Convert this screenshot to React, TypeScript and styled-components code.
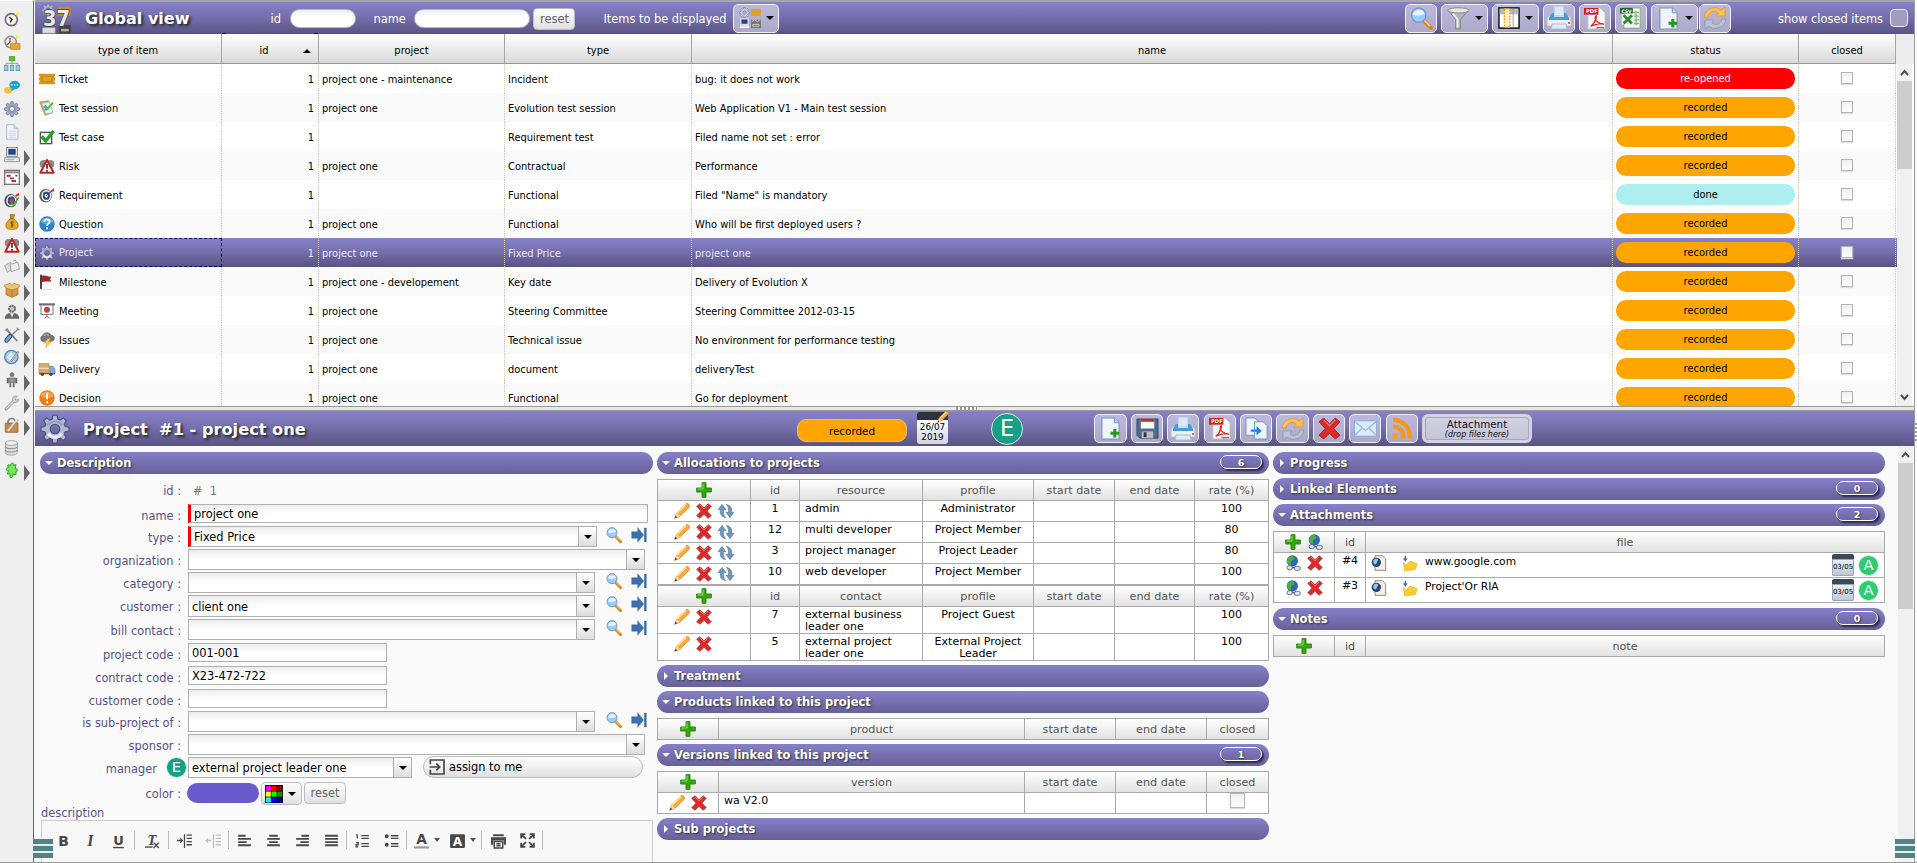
import React from "react";
import styled, { createGlobalStyle, css } from "styled-components";

const GlobalStyle = createGlobalStyle`
  * { box-sizing: border-box; }
  body { margin: 0; background: #fafafa; overflow: hidden; }
  body, button, input { font-family: "DejaVu Sans", Verdana, sans-serif; font-size: 11.4px; }
`;

const purple = "linear-gradient(#8781c9, #7670ae 45%, #595384)";

/* ------------------------------------------------------------------ icons */

type Draw = React.ReactNode;

const gearPath =
  "M10.3 1h3.4l.5 3 2 .9 2.5-1.8 2.4 2.4-1.8 2.5.9 2 3 .5v3.2l-3 .5-.9 2 1.8 2.5-2.4 2.4-2.5-1.8-2 .9-.5 3h-3.4l-.5-3-2-.9-2.5 1.8-2.4-2.4 1.8-2.5-.9-2-3-.5v-3.2l3-.5.9-2-1.8-2.5 2.4-2.4 2.5 1.8 2-.9z M12 8.2a3.8 3.8 0 1 0 0 7.6a3.8 3.8 0 1 0 0-7.6z";

const arts: Record<string, Draw> = {
  gear: (
    <>
      <path d={gearPath} fill="#a3aeca" stroke="#56638c" strokeWidth="1" fillRule="evenodd" />
      <circle cx="12" cy="12" r="5.6" fill="none" stroke="#7f8cb3" strokeWidth="1.2" />
    </>
  ),
  gearLight: (
    <>
      <path d={gearPath} fill="#b1b8d2" stroke="#465078" strokeWidth=".9" fillRule="evenodd" />
      <path d="M6.500 15.500c2 3.500 8 4.500 11 0" fill="none" stroke="#e6e9f6" strokeWidth="2.600" />
      <path d="M6.500 9c2-3.500 8-4.500 11 0" fill="none" stroke="#94a0c4" strokeWidth="1.600" />
    </>
  ),
  clock: (
    <>
      <circle cx="11" cy="13" r="9" fill="#f6f2df" stroke="#7b5c96" strokeWidth="2.400" />
      <path d="M8 9l4 4-3 4" fill="none" stroke="#333" strokeWidth="2.200" />
      <path d="M20 0l1.300 3.700L24 5l-2.700 1.300L20 10l-1.500-3.700L15 5l3.500-1.300z" fill="#ffe92e" />
    </>
  ),
  clockTicket: (
    <>
      <circle cx="10" cy="12" r="8.500" fill="#f0e6d8" stroke="#9b8ca4" strokeWidth="2.400" />
      <path d="M9 6v6l-4 4" fill="none" stroke="#555" strokeWidth="1.800" />
      <path d="M10 14h14v9H10z" fill="#e5a72f" stroke="#bd8217" />
      <path d="M19 1l1.300 3L23 5l-2.700 1.300L19 9l-1.500-2.700L15 5l2.500-1z" fill="#ffe92e" />
    </>
  ),
  tree: (
    <>
      <rect x="8" y="1" width="8" height="6" fill="#68c21d" stroke="#419010" />
      <path d="M12 7v7M3 15v-4h18v4" fill="none" stroke="#719fb8" strokeWidth="1.300" />
      <g fill="#9dcbe6" stroke="#4b86ad">
        <rect x="1" y="14" width="5" height="8" />
        <rect x="9.500" y="14" width="5" height="8" />
        <rect x="18" y="14" width="5" height="8" />
      </g>
    </>
  ),
  chat: (
    <>
      <ellipse cx="6" cy="17" rx="6" ry="5" fill="#f4c04b" />
      <path d="M8 9a8 6.500 0 1 1 8 6.500l-5 3 .5-4A7 6 0 0 1 8 9z" fill="#21a0d8" />
      <g fill="#fff">
        <circle cx="12" cy="9" r="1.200" />
        <circle cx="16" cy="9" r="1.200" />
        <circle cx="20" cy="9" r="1.200" />
      </g>
    </>
  ),
  doc: (
    <>
      <path d="M4 1h11l6 6v16H4z" fill="#f3f5fb" stroke="#a9b2cb" strokeWidth="1.300" />
      <path d="M15 1v6h6" fill="#cfd7ec" stroke="#a9b2cb" />
      <path d="M7 11h11M7 14h11M7 17h11M7 20h11" stroke="#b9c1d8" />
    </>
  ),
  computer: (
    <>
      <rect x="4" y="1" width="16" height="13" fill="#ddd" stroke="#666" />
      <rect x="6.500" y="3" width="11" height="8.500" fill="#23438f" />
      <path d="M1 16h22v6H1z" fill="#e6e6e6" stroke="#777" />
      <path d="M3 19h12" stroke="#888" />
    </>
  ),
  gantt: (
    <>
      <rect x="1" y="2" width="22" height="21" fill="#fff" stroke="#777" strokeWidth="2" />
      <path d="M1 5h22" stroke="#888" strokeWidth="3" />
      <path d="M4 10h6M11 18h7" stroke="#f01818" strokeWidth="3" />
      <path d="M9 14h6M17 10h3" stroke="#2f5fd0" strokeWidth="2.500" />
    </>
  ),
  target: (
    <>
      <ellipse cx="10" cy="13" rx="9.500" ry="10" fill="#555" />
      <ellipse cx="11" cy="13" rx="7.500" ry="8.500" fill="#fff" />
      <ellipse cx="11" cy="13" rx="5.500" ry="6.300" fill="#2b4f9d" />
      <ellipse cx="11" cy="13" rx="2.500" ry="3" fill="#f0ecec" />
      <path d="M11 13l8-7" stroke="#8b1a1a" strokeWidth="1.500" />
      <path d="M17 6l5-4 1 4-5 2z" fill="#e22" />
    </>
  ),
  targetCheck: (
    <>
      <ellipse cx="10" cy="13" rx="9.500" ry="10" fill="#555" />
      <ellipse cx="11" cy="13" rx="7.500" ry="8.500" fill="#fff" />
      <ellipse cx="11" cy="13" rx="5.500" ry="6.300" fill="#2b4f9d" />
      <ellipse cx="11" cy="13" rx="2.500" ry="3" fill="#e33" />
      <path d="M11 15l3 5 8-12" fill="none" stroke="#3fae2d" strokeWidth="2.400" />
      <path d="M17 5l5-4 1 4-5 2z" fill="#e22" />
    </>
  ),
  money: (
    <>
      <path d="M9 1h7l-2 6h-4z" fill="#c98e12" stroke="#8c6008" />
      <path d="M9.500 7.500h5C20 11 22 15 21 19c-.5 3-3 4-9 4s-8.500-1-9-4c-1-4 1-8 6.500-11.500z" fill="#e3a81f" stroke="#996a0b" />
      <path d="M14 12.500c-3-1.500-5 1-2 2.500s1.500 4-2 2.500M12 11v9" fill="none" stroke="#5c3f05" strokeWidth="1.400" />
    </>
  ),
  risk: (
    <>
      <circle cx="7" cy="9" r="6" fill="#8a8a8a" />
      <circle cx="17" cy="9" r="6" fill="#8a8a8a" />
      <path d="M12 3l10 19H2z" fill="#fff" stroke="#c92020" strokeWidth="3" strokeLinejoin="round" />
      <path d="M12 9v7M12 18v2.500" stroke="#222" strokeWidth="2.400" />
    </>
  ),
  cards: (
    <>
      <path d="M1 10l9-5 4 9-9 6z" fill="#ddd" stroke="#888" />
      <path d="M9 8l12-3 2 10-12 4z" fill="#eee" stroke="#888" />
      <path d="M14 3c2-2 5-1 4 2" fill="none" stroke="#888" strokeWidth="1.500" />
    </>
  ),
  box: (
    <>
      <path d="M3 9l9 3 9-3v10l-9 4-9-4z" fill="#d7983e" stroke="#a56d1e" />
      <path d="M3 9L0 5l9-3 3 3 3-3 9 3-3 4-9 3z" fill="#efc57c" stroke="#b27d2c" />
      <path d="M12 12v11" stroke="#a56d1e" />
    </>
  ),
  person: (
    <>
      <circle cx="12" cy="7" r="4.500" fill="#ccc" stroke="#666" strokeWidth="3" strokeDasharray="3 1" />
      <path d="M1 22c0-6 5-9 11-9s11 3 11 9z" fill="#666" />
      <path d="M9 14l3 6 3-6z" fill="#eee" />
    </>
  ),
  tools: (
    <>
      <path d="M4 4l16 17" stroke="#777" strokeWidth="2.600" />
      <path d="M21 3L11 13" stroke="#888" strokeWidth="2" />
      <path d="M9 14l-5 6" stroke="#1f4a94" strokeWidth="7" strokeLinecap="round" />
      <path d="M9 14l-5 6" stroke="#7ba4dc" strokeWidth="4" strokeLinecap="round" />
      <path d="M1 5l4-4 2 4-2 2z" fill="#888" />
      <path d="M19 1l4 4" stroke="#999" strokeWidth="2" />
    </>
  ),
  globe: (
    <>
      <circle cx="11" cy="12" r="10" fill="#a8cbea" stroke="#5f87b3" strokeWidth="2" />
      <path d="M4 12l7-7 5 5-7 8z" fill="#dceefb" />
      <path d="M22 4L10 19" stroke="#888" strokeWidth="3" />
      <path d="M22 4L10 19" stroke="#eee" />
    </>
  ),
  robot: (
    <>
      <circle cx="12" cy="4" r="3.500" fill="#777" />
      <path d="M7 9h10v7H7z" fill="#999" stroke="#555" />
      <path d="M5.500 9v8M18.500 9v8M9.500 17v6M14.500 17v6" stroke="#666" strokeWidth="2.600" />
    </>
  ),
  wrench: (
    <>
      <path d="M3 21L16 8" stroke="#999" strokeWidth="4.500" strokeLinecap="round" />
      <path d="M13 7c-1-4 3-7 7-5l-3 4 1 2 4-2c1 4-3 6-6 5z" fill="#ccc" stroke="#999" />
      <path d="M3 21L16 8" stroke="#e4e4e4" strokeWidth="2" />
    </>
  ),
  bag: (
    <>
      <path d="M6 9c0-9 11-9 11 0" fill="none" stroke="#888" strokeWidth="2.400" />
      <rect x="2" y="9" width="19" height="14" rx="1" fill="#c98b45" stroke="#7f5220" />
      <path d="M20 3L6 21" stroke="#ddd" strokeWidth="3" />
      <path d="M22 4L8 22" stroke="#888" />
    </>
  ),
  db: (
    <>
      <path d="M2 4v15c0 5 18 5 18 0V4z" fill="#ddd" stroke="#888" />
      <ellipse cx="11" cy="4.500" rx="9" ry="3.500" fill="#f2f2f2" stroke="#888" />
      <path d="M2 10c0 4 18 4 18 0M2 15c0 4 18 4 18 0" fill="none" stroke="#888" strokeWidth="1.500" />
    </>
  ),
  puzzle: (
    <path
      d="M6 4l4 1c0-5 5-4 4 0l4-1-1 6c4 0 4 4 1 4v5l-5-1c1 4-1 6-4 5v-5H5l2-5c-4 1-5-4-1-4z"
      fill="#6fe75a"
      stroke="#2da41c"
      strokeWidth="1.500"
    />
  ),
  ticket: (
    <>
      <path d="M0 4h24v3c-2 1-2 2 0 3v4c-2 1-2 2 0 3v3H0v-3c2-1 2-2 0-3v-4c2-1 2-2 0-3z" fill="#d7951b" />
      <path d="M5 8h14v8H5z" fill="#e0a02e" stroke="#c0820f" />
    </>
  ),
  session: (
    <>
      <path d="M1 3l13-2 6 18-11 4z" fill="#e2ab62" stroke="#b57b32" />
      <path d="M4 5l12-2 5 16-11 2z" fill="#e8f6fb" stroke="#81a5b8" />
      <path d="M7 9l4 4M8 15l6-1" stroke="#5394d3" strokeWidth="2" />
      <path d="M9 8l4 5 8-9" fill="none" stroke="#53b946" strokeWidth="3" />
    </>
  ),
  testcase: (
    <>
      <rect x="2" y="5" width="17" height="17" fill="#f2f2f2" stroke="#555" strokeWidth="2" />
      <path d="M4 11l6 7L22 3" fill="none" stroke="#1fa31f" strokeWidth="5" />
    </>
  ),
  question: (
    <>
      <circle cx="12" cy="12" r="11.500" fill="#2c83c8" />
      <path d="M2 9a10.500 9 0 0 1 20 0c-5 4-15 4-20 0z" fill="#62abe0" />
      <path d="M8 9c0-5 8-5 8-.5 0 3-4 3-4 6.500M12 17v3" fill="none" stroke="#fff" strokeWidth="2.600" />
    </>
  ),
  flag: (
    <>
      <path d="M3 1v22" stroke="#222" strokeWidth="2.500" />
      <path d="M4 3c6-2 8 2 15 1l-3 4 3 3c-7 1-9-1-15 1z" fill="#a02626" />
      <path d="M2 23h18" stroke="#ddd" strokeWidth="1.500" />
    </>
  ),
  meeting: (
    <>
      <path d="M0 2h24" stroke="#666" strokeWidth="3" />
      <rect x="3" y="3" width="18" height="14" fill="#fff" stroke="#777" strokeWidth="1.500" />
      <circle cx="12" cy="10" r="4.500" fill="#d63b31" />
      <path d="M12 10h4a4 4 0 0 1-2 3.500z" fill="#3e77b6" />
      <path d="M12 17v3l-4 3M12 20l4 3" fill="none" stroke="#777" strokeWidth="1.500" />
    </>
  ),
  storm: (
    <>
      <path d="M5 14a5 5 0 0 1 1-9c2-5 10-5 12 0 6 0 7 8 1 9z" fill="#777" stroke="#555" />
      <path d="M7 6c2-3 7-3 8 0" fill="none" stroke="#aaa" strokeWidth="2" />
      <path d="M13 10l-5 7h4l-2 7 8-9h-4l3-5z" fill="#ffc95a" stroke="#e79b1f" strokeWidth=".7" />
    </>
  ),
  truck: (
    <>
      <rect x="0" y="4" width="15" height="14" fill="#d8aa6c" stroke="#b58343" />
      <path d="M0 11h15" stroke="#f2d9ae" strokeWidth="2" />
      <path d="M16 8h5l3 5v6h-8z" fill="#84abd4" stroke="#5279a5" />
      <path d="M0 19h24" stroke="#666" strokeWidth="2" />
      <circle cx="5" cy="20" r="2.500" fill="#444" />
      <circle cx="18" cy="20" r="2.500" fill="#444" />
    </>
  ),
  decision: (
    <>
      <circle cx="12" cy="12" r="11.500" fill="#ef7d12" />
      <path d="M2 9a10.500 9 0 0 1 20 0c-5 4-15 4-20 0z" fill="#f9a24e" />
      <path d="M12 4v10M12 16.500v3.500" stroke="#fff" strokeWidth="3" />
    </>
  ),
  search: (
    <>
      <path d="M14 14l8 8" stroke="#d28a24" strokeWidth="4.200" strokeLinecap="round" />
      <path d="M15 14l6 6" stroke="#ffd183" strokeWidth="1.500" />
      <circle cx="9" cy="8.500" r="7.500" fill="#9ccdf8" stroke="#7299cc" strokeWidth="1.500" />
      <path d="M3 8c1-6 11-7 12-1-4 2-8 3-12 1z" fill="#e3f3ff" />
    </>
  ),
  funnel: (
    <>
      <path d="M1 3l8 10v10h5V13l9-10z" fill="#b4b4b4" stroke="#858585" />
      <path d="M6 7l5 6v8" fill="none" stroke="#eee" strokeWidth="2" />
      <ellipse cx="12" cy="3.500" rx="11" ry="2.700" fill="#e5e5e5" stroke="#8b8b8b" />
    </>
  ),
  columns: (
    <>
      <rect x="1" y="1" width="22" height="22" fill="#fff" stroke="#111" strokeWidth="1.600" />
      <path d="M2 5h20" stroke="#bbb" strokeWidth="6" />
      <rect x="7" y="2" width="6" height="20" fill="#fff1c7" stroke="#dca62c" strokeWidth="1.600" strokeDasharray="2 1.300" />
      <path d="M16.500 2v20" stroke="#999" />
    </>
  ),
  printer: (
    <>
      <path d="M7 0h10v11H7z" fill="#dbe9f6" stroke="#b5c4d8" />
      <path d="M0 11l2-1h20l2 1v9H0z" fill="#eee" stroke="#bcbcc8" />
      <path d="M2 12l3-5h2v4h10V7h2l3 5v2H2z" fill="#3f9fdc" />
      <path d="M5 18h14l1 5H4z" fill="#dcecf9" stroke="#a9bed2" />
      <circle cx="22" cy="17" r="1" fill="#d33" />
    </>
  ),
  pdf: (
    <>
      <path d="M4 1h13l5 5v17H4z" fill="#f7f7f7" stroke="#bbb" />
      <rect x="0" y="1" width="15" height="7" fill="#d31f1f" />
      <text x="2" y="6.700" fontSize="5.500" fontWeight="700" fill="#fff">PDF</text>
      <path d="M7 20c6-4 7-14 5-10s4 8 9 8c-4-2-9 0-14 2z" fill="none" stroke="#df2424" strokeWidth="1.300" />
      <path d="M13 21.500h8" stroke="#777" strokeWidth="1.500" />
    </>
  ),
  csv: (
    <>
      <path d="M4 1h18v22H4z" fill="#f3faf1" stroke="#8aa984" />
      <path d="M14 6h7M14 10h7M14 14h7M14 18h7M17.500 4v16" stroke="#8ab47e" strokeWidth="1.500" />
      <path d="M2 8h13v11H2z" fill="#e8f4e5" />
      <path d="M4 9l9 9M13 9l-9 9" stroke="#338a35" strokeWidth="3" />
      <rect x="0" y="1" width="14" height="6" fill="#2f6630" />
      <text x="1.500" y="6" fontSize="5" fontWeight="700" fill="#fff">CSV</text>
    </>
  ),
  newDoc: (
    <>
      <path d="M3 1h13l5 5v17H3z" fill="#f0f5fc" stroke="#7894c4" strokeWidth="1.200" />
      <path d="M16 1v5h5" fill="#c3d5ee" stroke="#7894c4" />
      <path d="M16.500 12.500v9M12 17h9" stroke="#26991c" strokeWidth="3.200" />
    </>
  ),
  refresh: (
    <>
      <path d="M1 11C2 2 13-1 18 4l4-3v9h-9l2-3c-4-3-9-1-10 4z" fill="#f8c257" stroke="#dc9729" strokeWidth=".8" />
      <path d="M23 13c-1 9-12 12-17 7l-4 3v-9h9l-2 3c4 3 9 1 10-4z" fill="#b9c4d4" stroke="#8a97ac" strokeWidth=".8" />
    </>
  ),
  save: (
    <>
      <path d="M1 2h22v20H4l-3-3z" fill="#4e6a8d" stroke="#304763" />
      <path d="M5 2h14v10H5z" fill="#fff" />
      <path d="M5 2h14v3H5z" fill="#d22" />
      <path d="M6 15h12v7H6z" fill="#b9bec4" />
      <path d="M8 16h3v5H8z" fill="#333" />
    </>
  ),
  copy: (
    <>
      <path d="M1 1h9l4 4v14H1z" fill="#f0f5fc" stroke="#6f92cb" />
      <path d="M10 5h9l4 4v14H10z" fill="#f0f5fc" stroke="#6f92cb" />
      <path d="M6 13h6V9.500l5.500 5L12 19v-3.500H6z" fill="#1b87e2" />
    </>
  ),
  cross: (
    <>
      <path d="M6 1l6 6 6-6 5 4-6.500 7L23 19l-5 4-6-6-6 6-5-4 6.500-7L1 5z" fill="#dc2a2a" stroke="#a91616" strokeWidth=".8" />
      <path d="M6 3l6 6 6-6" fill="none" stroke="#f17c7c" strokeWidth="1.200" />
    </>
  ),
  mail: (
    <>
      <rect x="0.500" y="4" width="23" height="16" fill="#dcebfb" stroke="#8cadd8" />
      <path d="M1 5l11 9L23 5M1 19l8-8M23 19l-8-8" fill="none" stroke="#9cb8dd" strokeWidth="1.300" />
    </>
  ),
  rss: (
    <>
      <circle cx="4.500" cy="20" r="3" fill="#f7a01e" />
      <path d="M2 10c7 0 11 5 11 12.500M2 3c11 0 18 8 18 19.500" fill="none" stroke="#f7971e" strokeWidth="4.500" />
    </>
  ),
  plus: (
    <>
      <path d="M9 1h6v8h8v6h-8v8H9v-8H1V9h8z" fill="#35a80d" stroke="#1f7d08" strokeWidth="1.300" />
      <path d="M10.500 10.500v-8M2.500 10.500h8" stroke="#8be05c" strokeWidth="1.500" />
    </>
  ),
  pencil: (
    <>
      <path d="M1 23l3-8L18 1c3-1 6 2 5 5L9 20z" fill="#f9a83c" stroke="#ce7a18" />
      <path d="M5 15L18 2" stroke="#ffe08d" strokeWidth="2.500" />
      <path d="M1 23l3-8 5 5z" fill="#f5d7b0" />
      <path d="M1 23l1.500-4 2.500 2.500z" fill="#333" />
    </>
  ),
  swap: (
    <>
      <path d="M0 10l6-8 6 8H8.500c-1 5 0 8 3 12C4 20 2 15 4 10z" fill="#6f95b8" stroke="#50748f" strokeWidth=".8" />
      <path d="M24 14l-6 8-6-8h3.500c1-5 0-8-3-12 7.500 2 9.500 7 7.500 12z" fill="#6f95b8" stroke="#50748f" strokeWidth=".8" />
    </>
  ),
  earthLink: (
    <>
      <circle cx="11" cy="9" r="8.500" fill="#2f69b5" />
      <path d="M6 3c4-3 8-1 8 2s-6 3-5 7-3 3-5 0-2-6 2-9z" fill="#4cae42" />
      <path d="M5 19h14" stroke="#555" strokeWidth="2" />
      <rect x="3" y="16" width="8" height="6" rx="3" fill="#dde4ee" stroke="#60708a" strokeWidth="1.500" />
      <rect x="14" y="17" width="9" height="6" rx="3" fill="#dde4ee" stroke="#60708a" strokeWidth="1.500" />
    </>
  ),
  webFile: (
    <>
      <path d="M6 1h11l5 5v17H6z" fill="#f5efdf" stroke="#8b7b5c" strokeWidth="1.300" />
      <circle cx="8" cy="11" r="7" fill="#26477d" />
      <path d="M6 6c4-1 6 1 4 3s-1 6-4 5-4-6 0-8z" fill="#9fc3e5" />
    </>
  ),
  note: (
    <>
      <path d="M2 11l4 4 6-6 11 4-3 9-16 2z" fill="#fccb2c" stroke="#e6b323" strokeWidth=".8" />
      <path d="M5 1v6M2.500 5L5 8.500 7.500 5" fill="none" stroke="#3b6fb3" strokeWidth="2" />
    </>
  ),
  goto: <path d="M1 7h9V1l9 11-9 11v-6H1zM20 1.500h3v21h-3z" fill="#3a6fb0" stroke="#2b5793" strokeWidth=".5" />,
  assign: (
    <>
      <path d="M2 8V1.500h20.500v21H2V16" fill="none" stroke="#444" strokeWidth="2.500" />
      <path d="M1 12h15M11 7l5 5-5 5" fill="none" stroke="#444" strokeWidth="2.400" />
    </>
  ),
  palette: (
    <>
      <rect width="24" height="24" fill="#000" />
      {["#f0f", "#f00", "#900", "#ff0", "#0f0", "#090", "#0ff", "#00f", "#009"].map((c, i) => (
        <rect key={c} x={1 + (i % 3) * 7.700} y={1 + Math.floor(i / 3) * 7.700} width="6.800" height="6.800" fill={c} />
      ))}
    </>
  ),
  itemSet: (
    <>
      <g transform="scale(.5)"><path d={gearPath} fill="#c3cce2" stroke="#7b85ab" strokeWidth="1.500" fillRule="evenodd" /></g>
      <path d="M13 2h11v8H13z" fill="#dea02f" />
      <path d="M2 13h8v6H2z" fill="#23438f" stroke="#ddd" strokeWidth="1.500" />
      <path d="M1 20h10v3H1z" fill="#eee" />
      <path d="M13 14h11v9H13z" fill="#777" />
      <path d="M14 16l3-2 3 2 3-2M15 19h7v2h-7z" stroke="#ccc" fill="none" />
    </>
  ),
  logo: (
    <>
      <g transform="scale(.46)"><path d={gearPath} fill="#aab4cf" stroke="#5d6590" fillRule="evenodd" /></g>
      <path d="M13 3h10v7H13z" fill="#bd8b31" />
      <path d="M1 19h10v4.500H1z" fill="#ddd" stroke="#888" strokeWidth=".6" />
      <path d="M14 17h9v6.500h-9z" fill="#444" />
      <path d="M15.500 20h6v2h-6z" fill="#aaa" />
      <text x="1.500" y="18" fontSize="17" fontWeight="700" textLength="21" lengthAdjust="spacingAndGlyphs" fill="#e9e9e9" stroke="#444" strokeWidth="1.200" paintOrder="stroke">37</text>
    </>
  ),
};

const Svg = styled.svg`
  display: block;
  flex: none;
  overflow: visible;
`;

const Icon = ({ name, size = 16 }: { name: string; size?: number }) => (
  <Svg width={size} height={size} viewBox="0 0 24 24">{arts[name]}</Svg>
);

/* ----------------------------------------------------------------- layout */

const Page = styled.div`
  position: relative;
  display: flex;
  width: 1917px;
  height: 863px;
  overflow: hidden;
  background: #fafafa;
  border-bottom: 1px solid #999;
`;

const SideBar = styled.nav`
  width: 34px;
  flex: none;
  background: #efefef;
  border-top: 1px solid #fff;
  border-right: 1px solid #666;
  padding-top: 7px;
`;

const SideItem = styled.div`
  display: flex;
  align-items: center;
  height: 22.55px;
  padding-left: 4px;
  gap: 4px;
`;

const SideArrow = styled.i`
  margin-top: 6px;
  border-left: 6px solid #666;
  border-top: 8px solid transparent;
  border-bottom: 8px solid transparent;
`;

const Main = styled.main`
  width: 1880px;
  margin-left: 1px;
  flex: none;
  display: flex;
  flex-direction: column;
  border-top: 2px solid #a5a5a5;
  border-right: 1px solid #999;
`;

const TopBar = styled.header`
  display: flex;
  align-items: center;
  height: 32px;
  flex: none;
  background: ${purple};
  color: #fff;
  padding-left: 6px;
`;

const Title = styled.h1<{ $left: number; $size?: number }>`
  margin: 0 0 0 ${(p) => p.$left}px;
  padding-top: 1px;
  font-size: ${(p) => p.$size ?? 16}px;
  white-space: pre;
  text-shadow: 2px 2px 3px #222;
`;

const BarLabel = styled.span<{ $left: number; $w: number }>`
  margin-left: ${(p) => p.$left}px;
  width: ${(p) => p.$w}px;
  flex: none;
  white-space: nowrap;
  padding-top: 1px;
`;

const RoundInput = styled.input<{ $w: number }>`
  width: ${(p) => p.$w}px;
  height: 19px;
  padding: 0 8px;
  border: 1px solid #bbb;
  border-radius: 10px;
  background: linear-gradient(#eee, #fff 40%);
`;

const softButton = css`
  border: 1px solid #bcbcbc;
  border-radius: 4px;
  background: linear-gradient(#fff, #e0e0e0);
  color: #666;
  padding: 0;
`;

const ResetButton = styled.button`
  ${softButton}
  height: 22px;
  width: 42px;
`;

const ToolButton = styled.button<{ $w?: number; $gap?: number }>`
  display: flex;
  align-items: center;
  justify-content: center;
  gap: 5px;
  width: ${(p) => p.$w ?? 32}px;
  height: 29px;
  flex: none;
  margin-left: ${(p) => p.$gap ?? 4}px;
  padding: 0;
  border: 1px solid #efeff8;
  border-radius: 5px;
  background: linear-gradient(#bdb9de, #aca9c8);
`;

const Caret = styled.i<{ $light?: boolean }>`
  border-top: 4px solid ${(p) => (p.$light ? "#555" : "#000")};
  border-left: ${(p) => (p.$light ? 3 : 4)}px solid transparent;
  border-right: ${(p) => (p.$light ? 3 : 4)}px solid transparent;
`;

const ClosedToggle = styled.span`
  width: 18px;
  height: 18px;
  margin: 0 6px 0 8px;
  border: 1px solid #e8e8f2;
  border-radius: 4px;
  background: #a09dbe;
`;

/* ------------------------------------------------------------------- grid */

const gridCols = "187px 97px 186px 187px 921px 186px 97px";

const GridHead = styled.div`
  display: grid;
  grid-template-columns: ${gridCols} 1fr;
  height: 30px;
  flex: none;
  background: linear-gradient(#fff, #d9d9d9);
  border-bottom: 1px solid #999;
`;

const HeadCell = styled.div<{ $sorted?: boolean }>`
  position: relative;
  display: flex;
  align-items: center;
  justify-content: center;
  padding-top: 4px;
  padding-right: ${(p) => (p.$sorted ? 12 : 0)}px;
  border-right: 1px solid #a5a5a5;
  font-size: 9.900px;
  color: #000;
`;

const HeadFiller = styled.div`
  margin-bottom: -1px;
  background: #ececec;
`;

const SortMark = styled.i`
  position: absolute;
  right: 7px;
  top: 15px;
  border-bottom: 4px solid #000;
  border-left: 4px solid transparent;
  border-right: 4px solid transparent;
`;

const FocusCorner = styled.i<{ $side: "left" | "right" }>`
  position: absolute;
  top: -1px;
  ${(p) => p.$side}: 0;
  width: 4px;
  height: 1px;
  background: #000080;
`;

const GridBody = styled.div`
  display: flex;
  height: 342px;
  flex: none;
  overflow: hidden;
  background: #fff;
`;

const Rows = styled.div`
  width: 1862px;
`;

const GridRow = styled.div<{ $alt?: boolean; $selected?: boolean }>`
  display: grid;
  grid-template-columns: ${gridCols};
  height: 29px;
  font-size: 9.900px;
  background: ${(p) => (p.$selected ? purple : p.$alt ? "#fafafa" : "#fff")};
  color: ${(p) => (p.$selected ? "#e9e7f6" : "#000")};
`;

const Cell = styled.div<{ $align?: string; $focus?: boolean }>`
  display: flex;
  align-items: center;
  justify-content: ${(p) => p.$align ?? "flex-start"};
  gap: 4px;
  min-width: 0;
  padding: 1px 4px 0 3px;
  border-right: 1px dotted #cfc8b4;
  white-space: nowrap;
  ${(p) => p.$focus && "border: 1px dashed #000080; padding: 0 3px;"}
`;

const NameCell = styled(Cell)`
  padding-left: ${(p) => (p.$focus ? 3 : 4)}px;
`;

const StatusBadge = styled.span<{ $bg: string; $fg?: string }>`
  display: flex;
  align-items: center;
  justify-content: center;
  width: 179px;
  height: 21px;
  margin: -1px -1px 0 0;
  flex: none;
  border-radius: 10px;
  background: ${(p) => p.$bg};
  color: ${(p) => p.$fg ?? "#000"};
`;

const CheckBox = styled.span<{ $w?: number }>`
  width: ${(p) => p.$w ?? 12}px;
  height: ${(p) => p.$w ?? 12}px;
  margin-top: -2px;
  border: 1px solid #b5b5b5;
  background: linear-gradient(#f0f0f0, #fdfdfd);
  box-shadow: 0 1px 1px #ddd;
`;

const ScrollTrack = styled.div<{ $gap: number }>`
  width: 15px;
  margin-left: ${(p) => p.$gap}px;
  background: #f0f0f0;
  display: flex;
  flex-direction: column;
`;

const ScrollThumb = styled.div<{ $h: number }>`
  height: ${(p) => p.$h}px;
  background: #cdcdcd;
`;

const ScrollArrow = ({ down }: { down?: boolean }) => (
  <Svg width="15" height="17" viewBox="0 0 15 17">
    <path d={down ? "M4 6l3.500 4L11 6" : "M4 11l3.500-4 3.500 4"} fill="none" stroke="#505050" strokeWidth="2" />
  </Svg>
);

const Spring = styled.div`
  flex: 1;
`;

const Splitter = styled.div`
  display: flex;
  justify-content: center;
  height: 5px;
  flex: none;
  background: #e8e8e8;
  border-top: 1px solid #999;
  border-bottom: 1px solid #999;
  padding-right: 17px;
`;

const Grip = styled.i`
  width: 21px;
  height: 3px;
  background: repeating-linear-gradient(90deg, #999 0 2px, #fff 2px 4px);
`;

/* ------------------------------------------------------------ detail area */

const DetailBar = styled(TopBar)`
  height: 35px;
  padding-left: 5px;
`;

const DetailStatus = styled.span`
  display: flex;
  align-items: center;
  justify-content: center;
  width: 110px;
  height: 23px;
  margin-top: 4px;
  flex: none;
  border: 1px solid #d9c193;
  border-radius: 9px;
  background: #ffa500;
  color: #000;
  font-size: 10.400px;
`;

const DetailTitle = styled.div`
  display: flex;
  width: 757px;
  flex: none;
  align-items: center;
`;

const DateCard = styled.div`
  position: relative;
  width: 31px;
  height: 32px;
  margin: -2px 0 0 10px;
  flex: none;
  border-top: 8px solid #2b3340;
  border-radius: 3px;
  background: linear-gradient(#fff, #cfd4de);
  color: #000;
  font-size: 8.800px;
  line-height: 10px;
  text-align: center;
  padding-top: 2px;
`;

const DatePencil = styled.span`
  position: absolute;
  right: -1px;
  top: -9px;
`;

const Avatar = styled.span<{ $size: number; $bg: string; $left?: number }>`
  display: flex;
  align-items: center;
  justify-content: center;
  width: ${(p) => p.$size}px;
  height: ${(p) => p.$size}px;
  flex: none;
  margin-left: ${(p) => p.$left ?? 0}px;
  border: 1px solid #d7efe7;
  border-radius: 50%;
  background: ${(p) => p.$bg};
  color: #fff;
  font-size: ${(p) => p.$size * 0.7}px;
  line-height: 1;
`;

const DropZone = styled.div`
  display: flex;
  flex-direction: column;
  align-items: center;
  justify-content: center;
  width: 110px;
  height: 29px;
  margin-left: 4px;
  border: 3px solid #d3d1e4;
  outline: 1px solid #a9a7c0;
  outline-offset: -4px;
  border-radius: 6px;
  background: linear-gradient(#d2d0e2, #c5c3d8);
  color: #111;
  font-size: 10.300px;
  line-height: 11px;
`;

const DropHint = styled.em`
  font-size: 8px;
  line-height: 9px;
`;

const Detail = styled.div`
  display: flex;
  flex: 1;
  min-height: 0;
  background: #fafafa;
`;

const Column = styled.section<{ $w: number; $left: number }>`
  width: ${(p) => p.$w}px;
  margin-left: ${(p) => p.$left}px;
  padding-top: 6px;
  flex: none;
`;

const SectionBar = styled.div<{ $top?: number }>`
  display: flex;
  align-items: center;
  height: 22px;
  margin-top: ${(p) => p.$top ?? 0}px;
  padding: 0 7px 0 5px;
  border-radius: 11px;
  background: linear-gradient(#8680c8, #66609a);
  color: #fff;
  font-size: 11.500px;
  font-weight: 700;
  text-shadow: 1px 1px 2px #333;
`;

const Twisty = styled.i<{ $open: boolean }>`
  width: 12px;
  &::before {
    content: "";
    display: block;
    width: 0;
    ${(p) =>
      p.$open
        ? "border-top: 4px solid #fff; border-left: 4px solid transparent; border-right: 4px solid transparent;"
        : "margin-left: 2px; border-left: 4px solid #fff; border-top: 4px solid transparent; border-bottom: 4px solid transparent;"}
  }
`;

const Count = styled.span`
  display: flex;
  align-items: center;
  justify-content: center;
  width: 42px;
  height: 14px;
  margin: -2px 0 0 auto;
  border: 1px solid #fff;
  border-radius: 7px;
  box-shadow: 2px 2px 2px #2c2950;
  font-size: 9.500px;
`;

const Section = ({ title, open, count, top }: { title: string; open?: boolean; count?: number; top?: number }) => (
  <SectionBar $top={top}>
    <Twisty $open={!!open} />
    {title}
    {count !== undefined && <Count>{count}</Count>}
  </SectionBar>
);

const Table = styled.div<{ $cols: string; $top: number }>`
  display: grid;
  grid-template-columns: ${(p) => p.$cols};
  margin-top: ${(p) => p.$top}px;
  border-top: 1px solid #aaa;
  border-left: 1px solid #aaa;
  background: #fff;
`;

const Th = styled.div`
  display: flex;
  align-items: center;
  justify-content: center;
  gap: 6px;
  height: 21px;
  border-right: 1px solid #aaa;
  border-bottom: 1px solid #aaa;
  background: linear-gradient(#fff, #e2e2e2);
  color: #555;
  font-size: 11.200px;
  padding-top: 1px;
  & > svg { margin-top: -2px; }
`;

const Td = styled.div<{ $h?: number; $left?: boolean }>`
  height: ${(p) => p.$h ?? 21}px;
  border-right: 1px solid #aaa;
  border-bottom: 1px solid #aaa;
  padding: 2px 5px 0;
  font-size: 11px;
  line-height: 12px;
  color: #000;
  text-align: ${(p) => (p.$left ? "left" : "center")};
`;

const Actions = styled.div`
  display: flex;
  justify-content: center;
  gap: 6px;
`;

const PairActions = styled(Actions)<{ $left?: number }>`
  justify-content: flex-start;
  padding-left: ${(p) => p.$left ?? 11}px;
`;

const FileCell = styled.div`
  display: flex;
  align-items: flex-start;
  gap: 15px;
`;

const FileName = styled.span`
  flex: 1;
  margin-left: -8px;
  padding-top: 1px;
  font-size: 10.700px;
`;

const MiniDate = styled.span`
  width: 22px;
  height: 22px;
  margin: -1px -11px 0 0;
  border-top: 5px solid #3a4858;
  border-radius: 2px;
  background: linear-gradient(#eef1f6, #bcc5d3);
  box-shadow: inset 0 0 0 1px #9aa5b5;
  font-size: 7px;
  line-height: 16px;
  text-align: center;
`;

/* ------------------------------------------------------------------- form */

const Field = styled.div<{ $h: number; $pad?: number }>`
  display: flex;
  align-items: flex-start;
  height: ${(p) => p.$h}px;
  padding-top: ${(p) => p.$pad ?? 0}px;
`;

const Label = styled.label`
  width: 141px;
  flex: none;
  margin-right: 7px;
  padding-top: 4px;
  text-align: right;
  line-height: 16px;
  color: #57518a;
  white-space: nowrap;
`;

const Value = styled.span`
  padding: 4px 0 0 5px;
  line-height: 16px;
  color: #777;
`;

const Box = styled.div<{ $w: number; $h?: number; $required?: boolean }>`
  display: flex;
  justify-content: space-between;
  width: ${(p) => p.$w}px;
  height: ${(p) => p.$h ?? 21}px;
  flex: none;
  border: 1px solid #b0b0b0;
  ${(p) => p.$required && "border-left: 3px solid #f00;"}
  padding-left: 3px;
  background: linear-gradient(#ececec, #fff 50%);
  color: #000;
  line-height: ${(p) => (p.$h ? p.$h : 21)}px;
  white-space: nowrap;
`;

const DropArrow = styled.span<{ $h: number }>`
  display: flex;
  align-items: center;
  justify-content: center;
  width: 18px;
  height: ${(p) => p.$h - 2}px;
  border-left: 1px solid #b0b0b0;
  background: linear-gradient(#fff, #ddd);
`;

const FieldIcons = styled.div<{ $left: number }>`
  display: flex;
  gap: 9px;
  margin-left: ${(p) => p.$left}px;
  padding-top: 1px;
`;

const AssignButton = styled.button`
  ${softButton}
  display: flex;
  align-items: center;
  gap: 4px;
  width: 220px;
  height: 22px;
  margin: -1px 0 0 11px;
  padding-left: 5px;
  border-radius: 11px;
  color: #000;
`;

const Swatch = styled.span`
  width: 72px;
  height: 20px;
  margin: 1px 2px 0 -1px;
  border-radius: 10px;
  background: #6a5acd;
`;

const PaletteButton = styled.button`
  ${softButton}
  display: flex;
  align-items: center;
  gap: 5px;
  width: 41px;
  height: 23px;
  margin-right: 2px;
  padding-left: 3px;
`;

const EditorLabel = styled.div`
  margin-left: 1px;
  height: 14px;
  line-height: 15px;
  color: #57518a;
`;

const Editor = styled.div`
  display: flex;
  align-items: center;
  width: 612px;
  height: 60px;
  margin: 0 0 0 1px;
  padding: 0 0 21px 7px;
  border: 1px solid #ccc;
  border-bottom: 0;
  background: #f8f8f8;
`;

const EditorTool = styled.span<{ $w: number }>`
  display: flex;
  align-items: center;
  justify-content: center;
  gap: 4px;
  width: ${(p) => p.$w}px;
`;

const EditorRule = styled.i`
  width: 1px;
  height: 18px;
  margin-right: 1px;
  background: #bcbcbc;
`;

const glyphs: Record<string, Draw> = {
  B: <text x="3" y="13" fontSize="14" fontWeight="700" textLength="10" lengthAdjust="spacingAndGlyphs" fill="#474747">B</text>,
  I: <text x="5" y="13" fontSize="15" fontWeight="700" fontStyle="italic" fontFamily="Liberation Serif" fill="#474747">I</text>,
  U: <g fill="#474747"><text x="3" y="12" fontSize="12" fontWeight="700" textLength="10" lengthAdjust="spacingAndGlyphs">U</text><path d="M3 14h10v1.300H3z" /></g>,
  Tx: <g fill="#474747"><text x="3" y="12" fontSize="14" fontWeight="700" fontStyle="italic" fontFamily="Liberation Serif">T</text><path d="M1 13.500h7v1.300H1z" /><path d="M9 10l5 5M14 10l-5 5" stroke="#474747" strokeWidth="1.300" /></g>,
  indent: <path d="M1 8h5M4 6l2 2-2 2M8 2v13M10 3h5M10 6h5M10 9h5M10 12h5" stroke="#474747" fill="none" strokeWidth="1.200" />,
  outdent: <path d="M1 8h5M3 6L1 8l2 2M8 2v13M10 3h5M10 6h5M10 9h5M10 12h5" stroke="#bdbdbd" fill="none" strokeWidth="1.200" />,
  left: <path d="M2 3.500h7M2 6.500h12M2 9.500h8M2 12.500h12" stroke="#474747" strokeWidth="1.800" />,
  center: <path d="M4 3.500h8M2 6.500h12M4 9.500h8M2 12.500h12" stroke="#474747" strokeWidth="1.800" />,
  right: <path d="M7 3.500h7M2 6.500h12M6 9.500h8M2 12.500h12" stroke="#474747" strokeWidth="1.800" />,
  justify: <path d="M2 3.500h12M2 6.500h12M2 9.500h12M2 12.500h12" stroke="#474747" strokeWidth="1.800" />,
  ol: <path d="M3 2v4M2 3h1M2 10h2v2H2v2h2M7 3.500h7M7 6h7M7 11h7M7 13.500h7" fill="none" stroke="#474747" strokeWidth="1.200" />,
  ul: <g fill="none" stroke="#474747" strokeWidth="1.300"><circle cx="3.500" cy="4" r="1.200" fill="#474747" /><circle cx="3.500" cy="12" r="1.200" fill="#474747" /><path d="M7.500 3.500h7M7.500 6h7M7.500 11h7M7.500 13.500h7" /></g>,
  color: <g fill="#474747"><text x="3" y="11.500" fontSize="13" fontWeight="700" textLength="10" lengthAdjust="spacingAndGlyphs">A</text><path d="M1 13.500h14v2H1z" fill="#999" /></g>,
  bg: <g><rect x="1" y="2" width="14" height="13" rx="1" fill="#474747" /><text x="3.500" y="12.800" fontSize="11.500" fontWeight="700" textLength="9" lengthAdjust="spacingAndGlyphs" fill="#fff">A</text></g>,
  print: <g fill="#474747"><path d="M3 2h10v2H3zM1 5h14v7h-2V8H3v4H1z" /><path d="M4 9h8v6H4zM6 11h4M6 13h4" stroke="#474747" fill="none" strokeWidth="1.400" /></g>,
  full: <path d="M2 6V2h4M10 2h4v4M14 10v4h-4M6 14H2v-4M2 2l4.500 4.500M14 2L9.500 6.500M14 14L9.500 9.500M2 14l4.500-4.500" fill="none" stroke="#474747" strokeWidth="1.700" />,
};

const editorTools: [string, number][] = [
  ["B", 28], ["I", 26], ["U", 31], ["|", 2], ["Tx", 32], ["|", 2], ["indent", 29], ["outdent", 29], ["|", 2],
  ["left", 29], ["center", 29], ["right", 29], ["justify", 29], ["|", 2], ["ol", 29], ["ul", 29], ["|", 2],
  ["color", 36], ["bg", 37], ["|", 2], ["print", 30], ["full", 29], ["|", 2],
];

const PanelHandle = styled.div<{ $left: number }>`
  position: absolute;
  left: ${(p) => p.$left}px;
  bottom: 4px;
  width: 20px;
  height: 19px;
  background: repeating-linear-gradient(#4f8385 0 5px, #e4ecec 5px 7px);
`;

const EdgeGrip = styled.div`
  position: absolute;
  right: 0;
  top: 423px;
  width: 2px;
  height: 20px;
  background: repeating-linear-gradient(#999 0 2px, #fff 2px 4px);
`;

/* ------------------------------------------------------------------- data */

const sideIcons = [
  "clock", "clockTicket", "tree", "chat", "gear", "doc", "computer", "gantt", "targetCheck", "money", "risk",
  "cards", "box", "person", "tools", "globe", "robot", "wrench", "bag", "db", "puzzle",
];

const items: [string, string, string, string, string, string][] = [
  ["ticket", "Ticket", "project one - maintenance", "Incident", "bug: it does not work", "re-opened"],
  ["session", "Test session", "project one", "Evolution test session", "Web Application V1 - Main test session", "recorded"],
  ["testcase", "Test case", "", "Requirement test", "Filed name not set : error", "recorded"],
  ["risk", "Risk", "project one", "Contractual", "Performance", "recorded"],
  ["target", "Requirement", "", "Functional", 'Filed "Name" is mandatory', "done"],
  ["question", "Question", "project one", "Functional", "Who will be first deployed users ?", "recorded"],
  ["gearLight", "Project", "project one", "Fixed Price", "project one", "recorded"],
  ["flag", "Milestone", "project one - developement", "Key date", "Delivery of Evolution X", "recorded"],
  ["meeting", "Meeting", "project one", "Steering Committee", "Steering Committee 2012-03-15", "recorded"],
  ["storm", "Issues", "project one", "Technical issue", "No environment for performance testing", "recorded"],
  ["truck", "Delivery", "project one", "document", "deliveryTest", "recorded"],
  ["decision", "Decision", "project one", "Functional", "Go for deployment", "recorded"],
];

const statusColors: Record<string, [string, string]> = {
  "re-opened": ["#ff0000", "#fff"],
  recorded: ["#ffa500", "#000"],
  done: ["#afeeee", "#000"],
};

const allocations = [
  ["1", "admin", "Administrator", "100"],
  ["12", "multi developer", "Project Member", "80"],
  ["3", "project manager", "Project Leader", "80"],
  ["10", "web developer", "Project Member", "100"],
];

const contacts = [
  ["7", "external business leader one", "Project Guest", "100"],
  ["5", "external project leader one", "External Project Leader", "100"],
];

type FieldDef = { label: string; h: number; w: number; bh?: number; value?: string; select?: boolean; required?: boolean; icons?: number };

const fields: FieldDef[] = [
  { label: "name :", h: 22, w: 460, bh: 19, value: "project one", required: true },
  { label: "type :", h: 23, w: 409, value: "Fixed Price", select: true, required: true, icons: 9 },
  { label: "organization :", h: 23, w: 457, select: true },
  { label: "category :", h: 23, w: 407, select: true, icons: 11 },
  { label: "customer :", h: 24, w: 407, bh: 22, value: "client one", select: true, icons: 11 },
  { label: "bill contact :", h: 24, w: 407, select: true, icons: 11 },
  { label: "project code :", h: 23, w: 199, bh: 19, value: "001-001" },
  { label: "contract code :", h: 23, w: 199, bh: 19, value: "X23-472-722" },
  { label: "customer code :", h: 22, w: 199, bh: 19 },
  { label: "is sub-project of :", h: 23, w: 407, select: true, icons: 11 },
  { label: "sponsor :", h: 23, w: 457, select: true },
];

const allocationCols = "93px 49px 123px 111px 81px 80px 74px";
const productCols = "61px 306px 91px 91px 62px";
const fileCols = "61px 31px 519px";

/* ------------------------------------------------------------------ parts */

const FormRow = ({ f }: { f: FieldDef }) => (
  <Field $h={f.h}>
    <Label>{f.label}</Label>
    <Box $w={f.w} $h={f.bh} $required={f.required}>
      <span>{f.value}</span>
      {f.select && <DropArrow $h={f.bh ?? 21}><Caret /></DropArrow>}
    </Box>
    {f.icons && (
      <FieldIcons $left={f.icons}>
        <Icon name="search" />
        <Icon name="goto" />
      </FieldIcons>
    )}
  </Field>
);

const ManagerLabel = styled(Label)`
  display: flex;
  justify-content: flex-end;
  width: 147px;
  margin-right: 1px;
  padding-top: 0;
  gap: 9px;
  line-height: 24px;
`;

const GridView = () => (
  <>
    <GridHead>
      <HeadCell>type of item</HeadCell>
      <HeadCell $sorted>
        <FocusCorner $side="left" />
        id
        <SortMark />
        <FocusCorner $side="right" />
      </HeadCell>
      <HeadCell>project</HeadCell>
      <HeadCell>type</HeadCell>
      <HeadCell>name</HeadCell>
      <HeadCell>status</HeadCell>
      <HeadCell>closed</HeadCell>
      <HeadFiller />
    </GridHead>
    <GridBody>
      <Rows>
        {items.map(([icon, kind, project, type, name, status], i) => {
          const selected = kind === "Project";
          const [bg, fg] = statusColors[status];
          return (
            <GridRow key={kind} $alt={i % 2 === 1} $selected={selected}>
              <NameCell $focus={selected}><Icon name={icon} />{kind}</NameCell>
              <Cell $align="flex-end">1</Cell>
              <Cell>{project}</Cell>
              <Cell>{type}</Cell>
              <Cell>{name}</Cell>
              <Cell $align="center"><StatusBadge $bg={bg} $fg={fg}>{status}</StatusBadge></Cell>
              <Cell $align="center"><CheckBox /></Cell>
            </GridRow>
          );
        })}
      </Rows>
      <ScrollTrack $gap={0}>
        <ScrollArrow />
        <ScrollThumb $h={88} />
        <Spring />
        <ScrollArrow down />
      </ScrollTrack>
    </GridBody>
  </>
);

const AllocationHead = ({ who }: { who: string }) => (
  <>
    <Th><Icon name="plus" /></Th>
    {["id", who, "profile", "start date", "end date", "rate (%)"].map((t) => <Th key={t}>{t}</Th>)}
  </>
);

const AllocationRow = ({ row, h, swap }: { row: string[]; h: number; swap?: boolean }) => (
  <>
    <Td $h={h}>
      <PairActions>
        <Icon name="pencil" />
        <Icon name="cross" />
        {swap && <Icon name="swap" />}
      </PairActions>
    </Td>
    <Td $h={h}>{row[0]}</Td>
    <Td $h={h} $left>{row[1]}</Td>
    <Td $h={h}>{row[2]}</Td>
    <Td $h={h} />
    <Td $h={h} />
    <Td $h={h}>{row[3]}</Td>
  </>
);

const FileRow = ({ id, name }: { id: string; name: string }) => (
  <>
    <Td $h={25}><PairActions $left={6}><Icon name="earthLink" /><Icon name="cross" /></PairActions></Td>
    <Td $h={25}>{id}</Td>
    <Td $h={25} $left>
      <FileCell>
        <Icon name="webFile" />
        <Icon name="note" />
        <FileName>{name}</FileName>
        <MiniDate>03/05</MiniDate>
        <Avatar $size={21} $bg="#2ecc71">A</Avatar>
      </FileCell>
    </Td>
  </>
);

export default function App() {
  return (
    <Page>
      <GlobalStyle />
      <SideBar>
        {sideIcons.map((name, i) => (
          <SideItem key={name}>
            <Icon name={name} />
            {i >= 6 && name !== "db" && <SideArrow />}
          </SideItem>
        ))}
      </SideBar>

      <Main>
        <TopBar>
          <Icon name="logo" size={31} />
          <Title $left={13}>Global view</Title>
          <BarLabel $left={81} $w={20}>id</BarLabel>
          <RoundInput $w={66} />
          <BarLabel $left={17} $w={41}>name</BarLabel>
          <RoundInput $w={116} />
          <BarLabel $left={3} $w={42}><ResetButton>reset</ResetButton></BarLabel>
          <BarLabel $left={28} $w={126}>Items to be displayed</BarLabel>
          <ToolButton $w={46}><Icon name="itemSet" size={22} /><Caret /></ToolButton>
          <Spring />
          <ToolButton><Icon name="search" size={23} /></ToolButton>
          <ToolButton $w={47}><Icon name="funnel" size={23} /><Caret /></ToolButton>
          <ToolButton $w={47}><Icon name="columns" size={22} /><Caret /></ToolButton>
          <ToolButton><Icon name="printer" size={24} /></ToolButton>
          <ToolButton><Icon name="pdf" size={23} /></ToolButton>
          <ToolButton><Icon name="csv" size={22} /></ToolButton>
          <ToolButton $w={47}><Icon name="newDoc" size={23} /><Caret /></ToolButton>
          <ToolButton $gap={1}><Icon name="refresh" size={24} /></ToolButton>
          <BarLabel $left={47} $w={104}>show closed items</BarLabel>
          <ClosedToggle />
        </TopBar>

        <GridView />

        <Splitter><Grip /></Splitter>

        <DetailBar>
          <DetailTitle>
            <Icon name="gearLight" size={30} />
            <Title $left={13} $size={16.2}>{"Project  #1 - project one"}</Title>
          </DetailTitle>
          <DetailStatus>recorded</DetailStatus>
          <DateCard>
            26/07<br />2019
            <DatePencil><Icon name="pencil" size={12} /></DatePencil>
          </DateCard>
          <Avatar $size={32} $bg="#16a085" $left={43}>E</Avatar>
          <ToolButton $gap={71} $w={33}><Icon name="newDoc" size={23} /></ToolButton>
          <ToolButton><Icon name="save" size={23} /></ToolButton>
          <ToolButton><Icon name="printer" size={24} /></ToolButton>
          <ToolButton $gap={5}><Icon name="pdf" size={23} /></ToolButton>
          <ToolButton><Icon name="copy" size={23} /></ToolButton>
          <ToolButton $w={33}><Icon name="refresh" size={24} /></ToolButton>
          <ToolButton><Icon name="cross" size={23} /></ToolButton>
          <ToolButton><Icon name="mail" size={23} /></ToolButton>
          <ToolButton $gap={5}><Icon name="rss" size={23} /></ToolButton>
          <DropZone>Attachment<DropHint>(drop files here)</DropHint></DropZone>
        </DetailBar>

        <Detail>
          <Column $w={613} $left={5}>
            <Section title="Description" open />
            <Field $h={30} $pad={5}>
              <Label>id :</Label>
              <Value># &nbsp;1</Value>
            </Field>
            {fields.map((f) => <FormRow key={f.label} f={f} />)}
            <Field $h={25}>
              <ManagerLabel>manager <Avatar $size={21} $bg="#16a085">E</Avatar></ManagerLabel>
              <Box $w={224}><span>external project leader one</span><DropArrow $h={21}><Caret /></DropArrow></Box>
              <AssignButton><Icon name="assign" size={16} />assign to me</AssignButton>
            </Field>
            <Field $h={24}>
              <Label>color :</Label>
              <Swatch />
              <PaletteButton><Icon name="palette" size={18} /><Caret /></PaletteButton>
              <ResetButton>reset</ResetButton>
            </Field>
            <EditorLabel>description</EditorLabel>
            <Editor>
              {editorTools.map(([name, w], i) =>
                name === "|" ? (
                  <EditorRule key={i} />
                ) : (
                  <EditorTool key={i} $w={w}>
                    <Svg width="17" height="17" viewBox="0 0 16 16">{glyphs[name]}</Svg>
                    {(name === "color" || name === "bg") && <Caret $light />}
                  </EditorTool>
                ),
              )}
            </Editor>
          </Column>

          <Column $w={612} $left={4}>
            <Section title="Allocations to projects" open count={6} />
            <Table $cols={allocationCols} $top={5}>
              <AllocationHead who="resource" />
              {allocations.map((r) => <AllocationRow key={r[0]} row={r} h={21} swap />)}
            </Table>
            <Table $cols={allocationCols} $top={0}>
              <AllocationHead who="contact" />
              {contacts.map((r) => <AllocationRow key={r[0]} row={r} h={27} />)}
            </Table>
            <Section title="Treatment" top={4} />
            <Section title="Products linked to this project" open top={4} />
            <Table $cols={productCols} $top={5}>
              <Th><Icon name="plus" /></Th>
              {["product", "start date", "end date", "closed"].map((t) => <Th key={t}>{t}</Th>)}
            </Table>
            <Section title="Versions linked to this project" open count={1} top={4} />
            <Table $cols={productCols} $top={5}>
              <Th><Icon name="plus" /></Th>
              {["version", "start date", "end date", "closed"].map((t) => <Th key={t}>{t}</Th>)}
              <Td><PairActions $left={6}><Icon name="pencil" /><Icon name="cross" /></PairActions></Td>
              <Td $left>wa V2.0</Td>
              <Td />
              <Td />
              <Td><Actions><CheckBox $w={15} /></Actions></Td>
            </Table>
            <Section title="Sub projects" top={4} />
          </Column>

          <Column $w={612} $left={4}>
            <Section title="Progress" />
            <Section title="Linked Elements" count={0} top={4} />
            <Section title="Attachments" open count={2} top={4} />
            <Table $cols={fileCols} $top={5}>
              <Th><Icon name="plus" /><Icon name="earthLink" /></Th>
              <Th>id</Th>
              <Th>file</Th>
              <FileRow id="#4" name="www.google.com" />
              <FileRow id="#3" name="Project'Or RIA" />
            </Table>
            <Section title="Notes" open count={0} top={5} />
            <Table $cols={fileCols} $top={5}>
              <Th><Icon name="plus" /></Th>
              <Th>id</Th>
              <Th>note</Th>
            </Table>
          </Column>

          <ScrollTrack $gap={13}>
            <ScrollArrow />
            <ScrollThumb $h={146} />
          </ScrollTrack>
        </Detail>
      </Main>

      <PanelHandle $left={33} />
      <PanelHandle $left={1895} />
      <EdgeGrip />
    </Page>
  );
}
